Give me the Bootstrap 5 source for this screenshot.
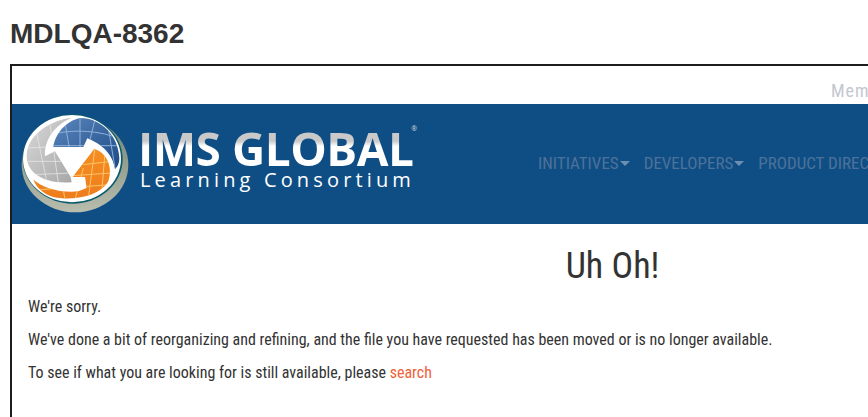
<!DOCTYPE html>
<html lang="en">
<head>
    <meta charset="UTF-8">
    <meta name="viewport" content="width=device-width, initial-scale=1.0">
    <title>MDLQA-8362</title>
    <link href="https://cdn.jsdelivr.net/npm/bootstrap@5.3.0/dist/css/bootstrap.min.css" rel="stylesheet">
    <style>
        html, body {
            overflow: hidden;
            height: 417px;
        }
        body {
            padding: 18px 0 0 10px;
            background-color: #fff;
            width: 1300px;
        }
        .issue-title {
            font-family: "Liberation Sans", Arial, sans-serif;
            font-size: 28px;
            font-weight: 700;
            line-height: 32px;
            color: #333;
            margin: 0 0 14px;
        }
        .page-frame {
            width: 1204px;
            height: 500px;
            border: 2px solid #1c1c1c;
            font-family: "Roboto Condensed", "Liberation Sans Narrow", Roboto, sans-serif;
            font-stretch: condensed;
        }
        .top-links {
            height: 38px;
            padding-left: 819px;
            padding-top: 13px;
            font-size: 18px;
            line-height: 24px;
            letter-spacing: 1px;
            color: #c3c7d0;
        }
        .brand-band {
            height: 120px;
            background-color: #0f4e85;
        }
        .logo-mark {
            margin: 9px 0 0 8px;
            width: 110px;
            height: 100px;
            flex: none;
        }
        .logo-text {
            margin: 22px 0 0 8px;
            width: 276px;
            flex: none;
            color: #fff;
            font-family: "Open Sans", sans-serif;
            font-stretch: normal;
            position: relative;
        }
        .logo-big {
            font-size: 46px;
            font-weight: 700;
            line-height: 44px;
            letter-spacing: -0.5px;
            white-space: nowrap;
            background: linear-gradient(#c9c9c9 0 34%, #fff 46%);
            -webkit-background-clip: text;
            background-clip: text;
            color: transparent;
        }
        .logo-small {
            font-size: 20px;
            line-height: 20px;
            letter-spacing: 4.15px;
            margin-left: 2px;
            white-space: nowrap;
        }
        .logo-reg {
            position: absolute;
            top: -1px;
            right: -3px;
            font-size: 7px;
            line-height: 8px;
            color: #ddd;
        }
        .main-menu {
            margin-left: 124px;
            font-size: 17px;
            color: #4d7299;
            white-space: nowrap;
            gap: 14px;
        }
        .menu-caret {
            display: inline-block;
            border-top: 5px solid #6f8fb0;
            border-left: 5px solid transparent;
            border-right: 5px solid transparent;
            vertical-align: 3px;
            margin-left: 1px;
        }
        .page-body {
            padding: 20px 16px 0;
            font-size: 15.98px;
            color: #333;
        }
        .page-body h1 {
            font-size: 36px;
            font-weight: 400;
            line-height: 44px;
            text-align: center;
            padding-left: 1px;
            margin: 0 0 8px;
        }
        .page-body p {
            margin: 0 0 12px;
            line-height: 21px;
        }
        .page-body a {
            color: #f0623a;
            text-decoration: none;
        }
    </style>
</head>
<body>
    <h2 class="issue-title">MDLQA-8362</h2>
    <div class="page-frame">
        <div class="top-links">Member</div>
        <div class="brand-band d-flex align-items-start">
            <svg class="logo-mark" viewBox="60 70 330 300" role="img" aria-label="IMS Global globe">
                <defs>
                    <linearGradient id="shadowFill" x1="0" y1="0" x2="0" y2="1">
                        <stop offset="0" stop-color="#6f8272"/>
                        <stop offset="1" stop-color="#b9bdae"/>
                    </linearGradient>
                    <linearGradient id="blueFill" x1="0" y1="0" x2="1" y2="1">
                        <stop offset="0" stop-color="#5b86bd"/>
                        <stop offset="1" stop-color="#1d4a86"/>
                    </linearGradient>
                    <linearGradient id="greyFill" x1="0" y1="0" x2="1" y2="1">
                        <stop offset="0" stop-color="#d8d8d8"/>
                        <stop offset="1" stop-color="#a8a8a8"/>
                    </linearGradient>
                    <linearGradient id="orangeFill" x1="0" y1="0" x2="0" y2="1">
                        <stop offset="0" stop-color="#f58f22"/>
                        <stop offset="1" stop-color="#ee7d1c"/>
                    </linearGradient>
                    <clipPath id="blueClip"><path d="M160 172 C165 135 195 95 240 85 C305 85 355 140 358 205 C358 222 352 232 345 238 C340 205 320 170 262 146 L250 172 Z"/></clipPath>
                    <clipPath id="greyClip"><path d="M215 84 C160 90 80 130 80 200 C80 245 125 285 215 278 L212 262 L165 185 L135 200 C132 150 165 105 215 84 Z"/></clipPath>
                    <clipPath id="orangeClip"><path d="M283 177 C320 190 340 230 325 275 C300 320 220 335 160 322 C130 312 110 295 100 270 C130 295 180 310 235 305 L260 295 L255 262 L218 262 Z"/></clipPath>
                </defs>
                <ellipse cx="225" cy="225" rx="160" ry="143" fill="url(#shadowFill)"/>
                <ellipse cx="218" cy="208" rx="150" ry="134" fill="#0b5a6b"/>
                <ellipse cx="216" cy="207" rx="147" ry="131" fill="#fff"/>
                <path d="M160 172 C165 135 195 95 240 85 C305 85 355 140 358 205 C358 222 352 232 345 238 C340 205 320 170 262 146 L250 172 Z" fill="url(#blueFill)"/>
                <path d="M215 84 C160 90 80 130 80 200 C80 245 125 285 215 278 L212 262 L165 185 L135 200 C132 150 165 105 215 84 Z" fill="url(#greyFill)"/>
                <path d="M283 177 C320 190 340 230 325 275 C300 320 220 335 160 322 C130 312 110 295 100 270 C130 295 180 310 235 305 L260 295 L255 262 L218 262 Z" fill="url(#orangeFill)"/>
                <g clip-path="url(#blueClip)" stroke="#8fb0d8" stroke-width="3" fill="none">
                    <path d="M150 135 C200 122 270 118 340 140 M145 168 L360 168 M195 100 L208 175 M240 85 L240 175 M285 90 L270 150 M325 115 L345 235"/>
                </g>
                <g clip-path="url(#greyClip)" stroke="#e4e4e4" stroke-width="2.5" fill="none">
                    <path d="M80 175 L180 170 M80 215 L195 215 M95 255 L215 250 M110 130 L140 275 M150 105 L175 280"/>
                </g>
                <g clip-path="url(#orangeClip)" stroke="#ffc469" stroke-width="3" fill="none">
                    <path d="M250 225 L335 215 M218 258 L335 250 M120 300 L330 285 M285 175 L265 325 M250 235 L225 330 M315 190 L305 310 M190 300 L195 330"/>
                </g>
            </svg>
            <div class="logo-text">
                <div class="logo-big">IMS GLOBAL</div>
                <span class="logo-reg">®</span>
                <div class="logo-small">Learning Consortium</div>
            </div>
            <div class="main-menu d-flex align-self-center">
                <span>INITIATIVES<i class="menu-caret"></i></span>
                <span>DEVELOPERS<i class="menu-caret"></i></span>
                <span>PRODUCT DIRECTORY</span>
            </div>
        </div>
        <div class="page-body">
            <h1>Uh Oh!</h1>
            <p>We're sorry.</p>
            <p>We've done a bit of reorganizing and refining, and the file you have requested has been moved or is no longer available.</p>
            <p>To see if what you are looking for is still available, please <a href="#">search</a></p>
        </div>
    </div>
    <script src="https://cdn.jsdelivr.net/npm/bootstrap@5.3.0/dist/js/bootstrap.bundle.min.js"></script>
</body>
</html>
